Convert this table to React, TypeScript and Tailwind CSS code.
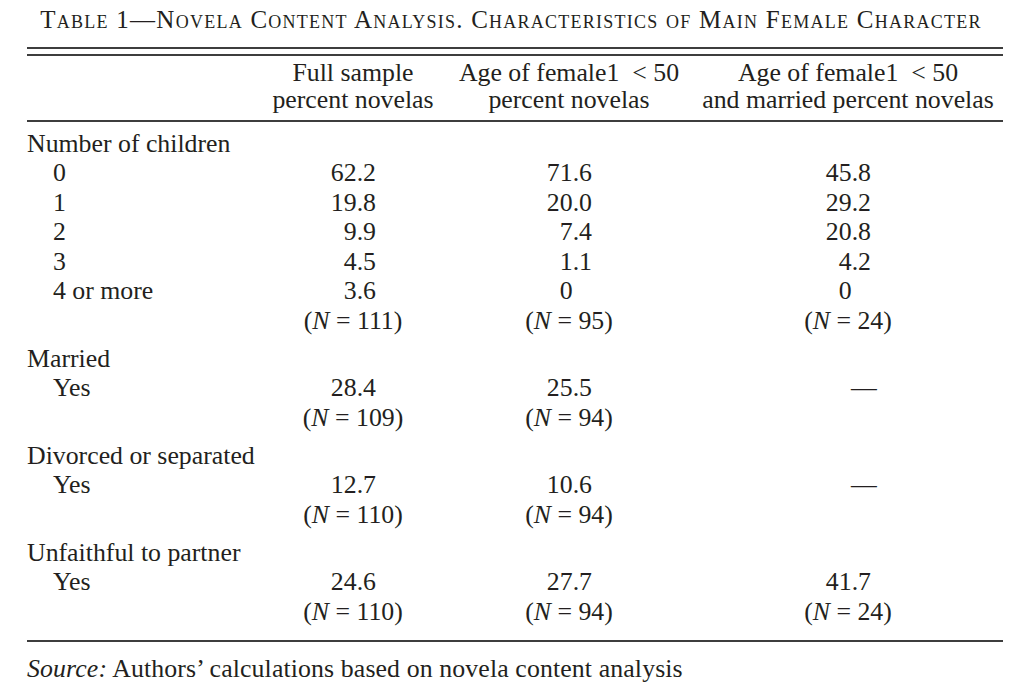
const COLS = 'grid grid-cols-[238px_176px_256px_302px]';

type Group = {
  title: string;
  rows: string[][];
  n: (string | null)[];
};

const groups: Group[] = [
  {
    title: 'Number of children',
    rows: [
      ['0', '62.2', '71.6', '45.8'],
      ['1', '19.8', '20.0', '29.2'],
      ['2', '9.9', '7.4', '20.8'],
      ['3', '4.5', '1.1', '4.2'],
      ['4 or more', '3.6', '0', '0'],
    ],
    n: ['111', '95', '24'],
  },
  { title: 'Married', rows: [['Yes', '28.4', '25.5', '—']], n: ['109', '94', null] },
  { title: 'Divorced or separated', rows: [['Yes', '12.7', '10.6', '—']], n: ['110', '94', null] },
  { title: 'Unfaithful to partner', rows: [['Yes', '24.6', '27.7', '41.7']], n: ['110', '94', '24'] },
];

function Num({ value }: { value: string }) {
  if (value === '—') {
    return <span className="inline-block w-[46px] pl-[26px] whitespace-nowrap">—</span>;
  }
  return (
    <span className="inline-block w-[46px] text-right whitespace-nowrap">
      {value}
      {!value.includes('.') && <span className="invisible">.0</span>}
    </span>
  );
}

function NCell({ n }: { n: string | null }) {
  if (!n) return <div />;
  return (
    <div className="text-center whitespace-nowrap">
      (<span className="italic">N</span> = {n})
    </div>
  );
}

export default function App() {
  return (
    <div className="w-[1022px] h-[694px] bg-white text-[#231f20] font-['Liberation_Serif',serif] overflow-hidden">
      <h1 className="pt-[5px] text-center text-[25px] leading-[30px] tracking-[1.25px] [font-variant-caps:small-caps] whitespace-nowrap">
        Table 1—Novela Content Analysis. Characteristics of Main Female Character
      </h1>

      <div className="ml-[27px] w-[976px] mt-[12px] text-[25.8px]">
        <div className="h-[2px] bg-[#3d3d3d]" />
        <div className="h-[5px]" />
        <div className="h-[2px] bg-[#3d3d3d]" />

        <div className={`${COLS} pt-[3px] pb-[6px] leading-[27.3px] text-center whitespace-nowrap`}>
          <div />
          <div>
            Full sample
            <br />
            percent novelas
          </div>
          <div>
            Age of female1{'\u2002'}&lt; 50
            <br />
            percent novelas
          </div>
          <div>
            Age of female1{'\u2002'}&lt; 50
            <br />
            and married percent novelas
          </div>
        </div>

        <div className="h-[2px] bg-[#3d3d3d]" />

        <div className="pt-[7px] leading-[29.5px]">
          {groups.map((g, gi) => (
            <div key={g.title} className={gi === 0 ? '' : 'mt-[8.5px]'}>
              <div>{g.title}</div>
              {g.rows.map((r) => (
                <div key={r[0]} className={COLS}>
                  <div className="pl-[26px]">{r[0]}</div>
                  {r.slice(1).map((v, i) => (
                    <div key={i} className="text-center">
                      <Num value={v} />
                    </div>
                  ))}
                </div>
              ))}
              <div className={COLS}>
                <div />
                {g.n.map((n, i) => (
                  <NCell key={i} n={n} />
                ))}
              </div>
            </div>
          ))}
        </div>

        <div className="mt-[14px] h-[2px] bg-[#3d3d3d]" />

        <p className="mt-[12px] leading-[29.5px] tracking-[0.12px]">
          <span className="italic">Source:</span> Authors’ calculations based on novela content analysis
        </p>
      </div>
    </div>
  );
}
